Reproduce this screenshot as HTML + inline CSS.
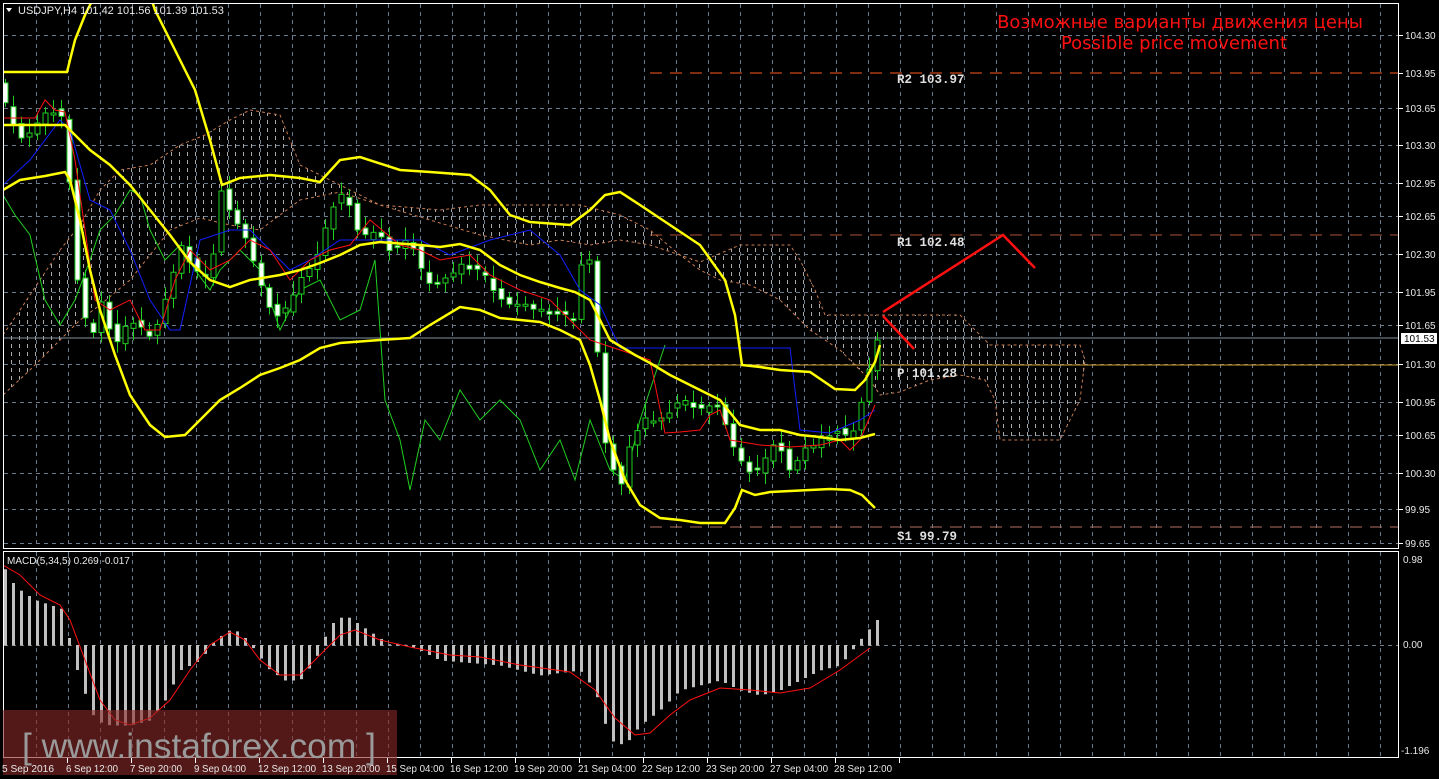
<!DOCTYPE html>
<html><head><meta charset="utf-8"><style>
html,body{margin:0;padding:0;background:#000;width:1439px;height:779px;overflow:hidden}
svg{display:block}
text{font-family:"Liberation Sans",sans-serif}
.mono{font-family:"Liberation Mono",monospace}
.dj{font-family:"DejaVu Sans",sans-serif}
</style></head><body>
<svg id="s" width="1439" height="779" xmlns="http://www.w3.org/2000/svg">
<defs>
<pattern id="hatch" width="8" height="8" patternUnits="userSpaceOnUse">
<line x1="3.5" y1="0" x2="3.5" y2="4" stroke="#c8c8c8" stroke-width="1"/>
</pattern>
<clipPath id="mainclip"><rect x="3" y="3" width="1396" height="546"/></clipPath>
<clipPath id="macdclip"><rect x="3" y="552" width="1396" height="205"/></clipPath>
</defs>
<rect width="1439" height="779" fill="#000"/>
<g id="grid" stroke="#6b7b8c" stroke-width="1" stroke-dasharray="4,4"></g>
<g clip-path="url(#mainclip)">
<polygon fill="url(#hatch)" stroke="#e89060" stroke-dasharray="3,3" stroke-width="1" opacity="0.85" points="3,335 20,310 40,280 60,250 80,225 100,190 120,170 150,165 180,145 205,135 230,120 250,110 280,115 290,140 300,165 330,180 380,205 440,210 480,205 580,205 600,210 620,215 650,230 680,255 700,262 740,245 790,245 800,260 815,290 825,315 960,315 975,330 990,345 1080,345 1085,360 1080,400 1060,440 1000,440 995,400 985,380 960,375 930,380 900,392 880,395 870,380 840,350 810,330 780,300 750,285 720,280 700,270 680,255 650,245 620,240 590,245 560,240 530,245 480,235 430,220 380,205 340,192 300,200 260,230 230,225 200,218 170,230 150,255 130,280 100,305 80,320 60,340 30,370 3,395"/>
<line x1="650" y1="73" x2="1399" y2="73" stroke="#ff5a1e" stroke-dasharray="12,8"/>
<line x1="650" y1="235" x2="1399" y2="235" stroke="#b05030" stroke-dasharray="12,8"/>
<line x1="650" y1="527" x2="1399" y2="527" stroke="#b07060" stroke-dasharray="12,8"/>
<line x1="650" y1="365" x2="1399" y2="365" stroke="#d0a030"/>
<line x1="3" y1="338" x2="1399" y2="338" stroke="#8090a0"/>
<polyline fill="none" stroke="#20d020" stroke-width="1" points="3,195 15,215 30,235 45,300 60,325 75,300 90,260 100,230 115,215 130,190 140,195 150,230 165,260 180,245 195,270 210,290 220,270 240,250 260,270 280,330 300,290 320,280 340,320 360,310 375,260 385,400 400,440 410,490 425,420 440,440 460,390 480,420 500,400 520,420 540,470 560,440 575,480 590,420 610,470 625,480 640,420 650,390 665,345"/>
<g id="candles"></g>
<polyline fill="none" stroke="#1020ff" stroke-width="1" points="3,185 30,160 60,120 70,130 90,200 110,210 130,250 150,300 170,330 180,330 200,240 230,230 250,230 270,250 290,270 310,260 340,240 420,240 450,255 490,240 530,230 560,255 580,290 600,305 620,348 790,348 795,390 800,430 830,433 860,420 875,410"/>
<polyline fill="none" stroke="#ff1010" stroke-width="1" points="3,118 35,118 45,100 55,110 65,112 75,160 85,230 95,300 110,310 130,300 145,330 160,330 175,280 190,250 210,270 230,260 250,240 270,250 290,280 310,260 330,250 350,245 370,220 400,245 420,250 440,260 470,255 490,275 520,290 550,300 570,320 590,340 620,350 650,360 665,433 680,432 700,430 710,415 720,410 730,440 760,445 790,447 820,445 840,440 850,450 860,440 875,405"/>
<g fill="none" stroke="#ffff00" stroke-width="2.5">
<polyline points="3,72 67,72 75,40 85,15 95,-5 150,-5 155,10 175,50 195,90 210,140 222,185 240,178 270,175 300,178 320,182 340,160 360,157 400,170 430,172 470,175 490,190 510,215 530,222 570,225 590,210 605,195 620,192 640,205 670,225 700,245 725,280 735,315 742,365 760,367 780,370 810,372 835,389 855,390 865,380 875,362 880,345"/>
<polyline points="3,125 65,125 75,135 90,150 110,165 130,185 150,210 170,235 190,262 210,280 230,287 250,280 280,275 300,270 320,263 340,255 360,245 380,242 420,245 440,247 460,244 480,250 500,265 520,275 540,282 560,288 575,292 590,300 610,340 635,355 650,363 670,375 700,390 720,400 740,425 760,430 780,430 800,435 820,437 840,440 860,438 875,434"/>
<polyline points="3,190 20,180 45,176 65,172 70,180 80,220 90,270 100,310 115,355 130,395 150,425 165,437 185,435 200,420 220,400 240,388 260,375 280,368 300,360 320,348 340,343 380,340 410,338 430,325 460,307 480,310 500,318 540,322 560,330 580,340 590,365 600,400 610,440 625,480 640,505 660,518 680,520 700,523 725,523 735,508 742,490 755,495 770,492 810,490 830,489 850,490 862,495 875,508"/>
</g>
<polyline fill="none" stroke="#ff1010" stroke-width="2.5" points="883,312 1003,235 1035,268"/>
<line x1="883" y1="316" x2="914" y2="349" stroke="#ff1010" stroke-width="2.5"/>
</g>
<g clip-path="url(#macdclip)">
<g id="macd"></g>
<polyline fill="none" stroke="#ff1010" stroke-width="1" points="3,565 20,575 40,595 60,605 70,620 85,660 100,700 115,720 130,725 150,718 170,700 190,670 210,645 230,632 245,640 260,660 280,675 300,675 320,655 340,635 355,630 380,640 410,647 450,655 480,657 520,665 570,672 595,690 615,718 635,735 650,733 670,715 690,700 720,688 750,690 780,693 810,688 840,670 870,648"/>
</g>
<rect x="3.5" y="3.5" width="1395" height="545" fill="none" stroke="#fff"/>
<rect x="3.5" y="551.5" width="1395" height="206" fill="none" stroke="#fff"/>
<rect x="3" y="710" width="394" height="65" fill="#8a2a2a" opacity="0.6"/>
<text x="22" y="758" font-size="35" fill="#9a9a9a" textLength="354" lengthAdjust="spacingAndGlyphs">[ www.instaforex.com ]</text>
<polygon points="6,8 12,8 9,12" fill="#fff"/>
<text x="18" y="14" font-size="11" fill="#e8e8e8">USDJPY,H4  101.42 101.56 101.39 101.53</text>
<text class="dj" x="1180" y="28" font-size="18" fill="#ff1010" text-anchor="middle">Возможные варианты движения цены</text>
<text class="dj" x="1174" y="49" font-size="18" fill="#ff1010" text-anchor="middle">Possible price movement</text>
<g font-size="12.5" font-weight="bold" fill="#e0e0e0">
<text class="mono" x="897" y="83">R2 103.97</text>
<text class="mono" x="897" y="246">R1 102.48</text>
<text class="mono" x="897" y="377">P 101.28</text>
<text class="mono" x="897" y="540">S1 99.79</text>
</g>
<text x="7" y="564" font-size="10" fill="#e8e8e8">MACD(5,34,5) 0.269 -0.017</text>
<g id="axis" font-size="10" fill="#e8e8e8"></g>
<rect x="1401" y="333" width="36" height="11" fill="#fff"/>
<text x="1404" y="342" font-size="10" fill="#000">101.53</text>
</svg>
<script>
var NS="http://www.w3.org/2000/svg";
function el(p,t,a,txt){var e=document.createElementNS(NS,t);for(var k in a)e.setAttribute(k,a[k]);if(txt)e.textContent=txt;p.appendChild(e);return e;}
var grid=document.getElementById('grid'),axis=document.getElementById('axis');
var hy=[[35,"104.30"],[108,"103.65"],[145,"103.30"],[183,"102.95"],[216,"102.65"],[254,"102.30"],[292,"101.95"],[325,"101.65"],[364,"101.30"],[402,"100.95"],[435,"100.65"],[473,"100.30"],[509,"99.95"],[543,"99.65"]];
hy.forEach(function(h){el(grid,'line',{x1:4,y1:h[0]+.5,x2:1398,y2:h[0]+.5});el(axis,'line',{x1:1399,y1:h[0]+.5,x2:1403,y2:h[0]+.5,stroke:'#fff'});el(axis,'text',{x:1405,y:h[0]+4},h[1]);});
el(axis,'text',{x:1405,y:77},"103.95");el(axis,'line',{x1:1399,y1:73.5,x2:1403,y2:73.5,stroke:'#fff'});
el(grid,'line',{x1:4,y1:645.5,x2:1398,y2:645.5});
el(axis,'text',{x:1403,y:563},"0.98");el(axis,'text',{x:1403,y:648},"0.00");el(axis,'text',{x:1401,y:754},"-1.196");
for(var x=36;x<1399;x+=32){el(grid,'line',{x1:x+.5,y1:4,x2:x+.5,y2:548});el(grid,'line',{x1:x+.5,y1:552,x2:x+.5,y2:757});}
var lbl=["5 Sep 2016","6 Sep 12:00","7 Sep 20:00","9 Sep 04:00","12 Sep 12:00","13 Sep 20:00","15 Sep 04:00","16 Sep 12:00","19 Sep 20:00","21 Sep 04:00","22 Sep 12:00","23 Sep 20:00","27 Sep 04:00","28 Sep 12:00"];
lbl.forEach(function(l,i){var x=2+64*i;el(axis,'text',{x:x,y:772,textLength:(l.length>11?58:52),lengthAdjust:'spacingAndGlyphs'},l);el(axis,'line',{x1:x+65.5,y1:758,x2:x+65.5,y2:763,stroke:'#fff'});});
function mk(pts){return function(x){for(var i=1;i<pts.length;i++){if(x<=pts[i][0]){var a=pts[i-1],b=pts[i];return a[1]+(b[1]-a[1])*(x-a[0])/(b[0]-a[0]);}}return pts[pts.length-1][1];};}
var cp=mk([[3,100],[20,140],[50,110],[65,120],[75,270],[90,345],[100,300],[115,345],[130,320],[150,335],[160,320],[180,245],[195,270],[210,280],[220,190],[235,220],[250,250],[265,300],[280,320],[300,280],[320,250],[330,210],[345,190],[360,240],[375,230],[390,250],[410,240],[425,280],[440,285],[460,265],[480,270],[500,300],[520,305],[540,310],[560,315],[575,320],[585,230],[595,300],[600,430],[620,490],[630,440],[645,420],[660,420],[680,400],[700,410],[715,400],[730,440],[745,470],[760,470],[775,440],[790,470],[805,450],[820,440],[835,430],[850,440],[862,400],[875,340]]);
var mp=mk([[3,565],[10,580],[20,590],[35,600],[50,605],[65,610],[70,645],[80,680],[95,720],[110,725],[130,725],[150,720],[165,700],[180,670],[200,660],[215,640],[230,630],[240,632],[255,650],[270,670],[285,680],[300,680],[315,660],[330,625],[345,615],[360,625],[375,635],[390,645],[400,643],[420,650],[440,660],[500,665],[520,670],[540,675],[580,670],[595,690],[610,740],[625,745],[640,725],[660,710],[680,690],[720,680],[740,690],[760,695],[780,690],[800,680],[820,670],[840,665],[860,640],[877,620]]);
var cg=document.getElementById('candles'),mg=document.getElementById('macd');
for(var i=0;i<110;i++){var x=5+8*i;var o=cp(x-8)+((i*5)%7-3),c=cp(x)+((i*3)%5-2);var t=Math.min(o,c),b=Math.max(o,c);if(b-t<2)b=t+2;var w1=4+(i*7)%11,w2=4+(i*5)%9;
el(cg,'line',{x1:x+.5,y1:t-w1,x2:x+.5,y2:b+w2,stroke:'#20d020'});
el(cg,'rect',{x:x-2,y:t,width:5,height:b-t,fill:(c>o?'#fff':'#000'),stroke:'#20d020','stroke-width':1});
var m=mp(x);var y0=645;el(mg,'rect',{x:x-1,y:Math.min(m,y0),width:3,height:Math.abs(m-y0)+.5,fill:'#c0c0c0'});}
</script>
</body></html>
